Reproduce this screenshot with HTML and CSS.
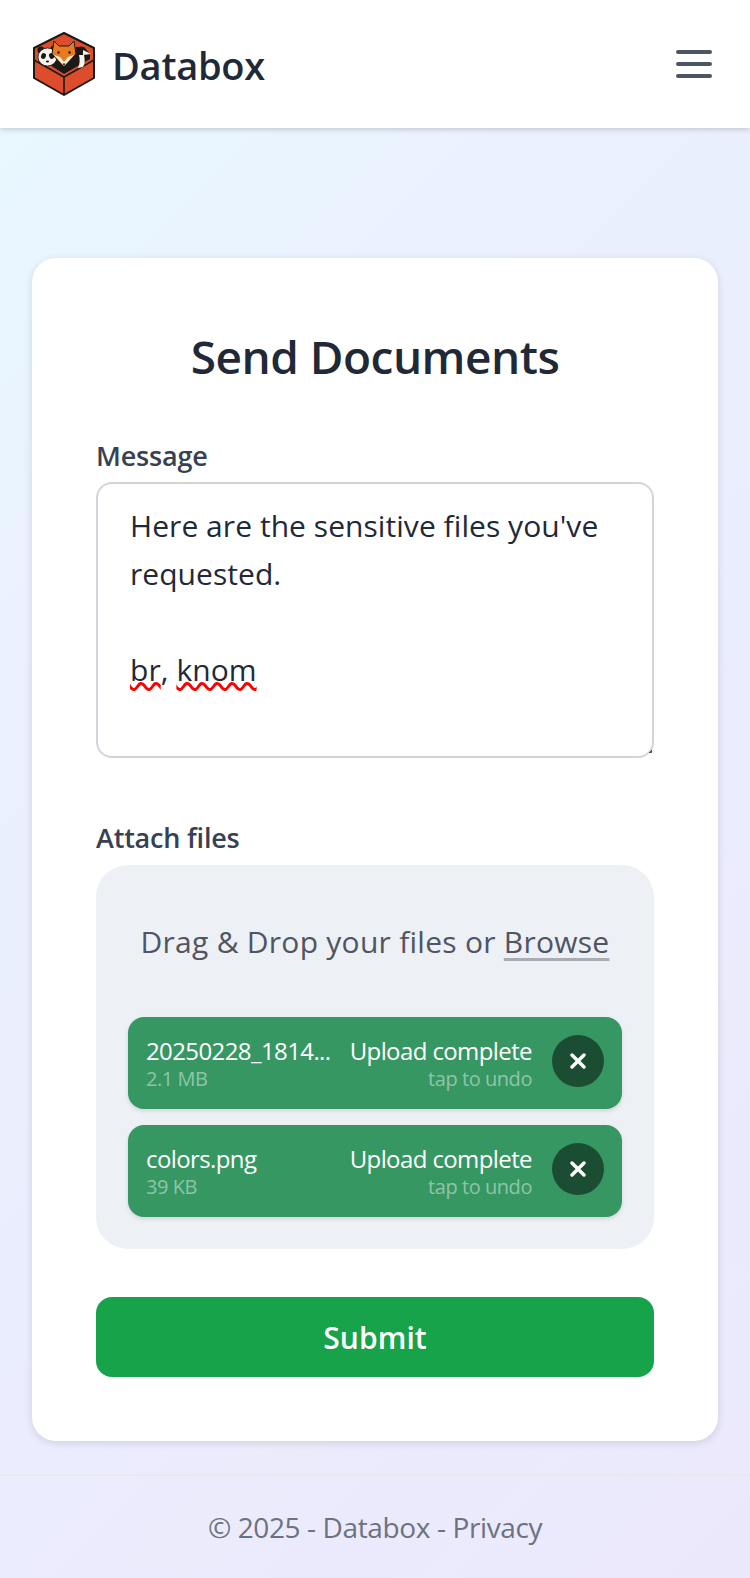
FILE: index.html
```html
<!DOCTYPE html>
<html lang="en">
<head>
  <meta charset="utf-8">
  <title>Databox</title>
  <meta name="viewport" content="width=device-width, initial-scale=1.0">
  <link rel="stylesheet" href="styles.css">
</head>
<body>
  <header class="topbar">
    <a class="brand" href="#">
      <svg class="brand-logo" viewBox="0 0 64 64" width="64" height="64" role="img" aria-label="Databox logo">
        <path d="M32 1 L62 16 V46 L32 63 L2 46 V16 Z" fill="#dd4c2b" stroke="#1c1a17" stroke-width="2" stroke-linejoin="round"/>
        <path d="M7 26 L32 42 L58 27 V22 L52 15 H44 L32 30 L20 24 Z" fill="#1c1a17"/>
        <path d="M2 28 L32 45 L62 28 M32 45 V63" fill="none" stroke="#1c1a17" stroke-width="1.6"/>
        <circle cx="9" cy="18" r="3.6" fill="#1c1a17"/>
        <circle cx="22" cy="17" r="3.6" fill="#1c1a17"/>
        <ellipse cx="15.5" cy="25" rx="9.5" ry="9" fill="#f7f4ee" stroke="#1c1a17" stroke-width=".8"/>
        <ellipse cx="11.5" cy="24" rx="2.4" ry="3" fill="#1c1a17" transform="rotate(20 11.5 24)"/>
        <ellipse cx="19.5" cy="24" rx="2.4" ry="3" fill="#1c1a17" transform="rotate(-20 19.5 24)"/>
        <ellipse cx="15.5" cy="29.5" rx="1.6" ry="1.1" fill="#1c1a17"/>
        <path d="M22 9 L27 14 H37 L42 9 L44 22 L32 35 L20 22 Z" fill="#ea7a1f" stroke="#1c1a17" stroke-width="1" stroke-linejoin="round"/>
        <path d="M22 23 L28 25 L32 30 L36 25 L42 23 L32 34 Z" fill="#fbf3e6"/>
        <circle cx="26.5" cy="20.5" r="1.2" fill="#1c1a17"/>
        <circle cx="37.5" cy="20.5" r="1.2" fill="#1c1a17"/>
        <path d="M30.5 31.5 H33.5 L32 34 Z" fill="#1c1a17"/>
        <circle cx="49" cy="20" r="5.5" fill="#1c1a17"/>
        <path d="M46 36 C48 32 48 27 47 23 L52 23 C53 28 53 32 51 35 Z" fill="#f7f4ee"/>
        <path d="M51 18 L59 22 L51 23 Z" fill="#f7f4ee"/>
      </svg>
      <span class="brand-name">Databox</span>
    </a>
    <button class="menu-btn" type="button" aria-label="Open menu">
      <svg viewBox="0 0 36 28" width="36" height="28" fill="none" stroke="#4b5563" stroke-width="4" stroke-linecap="round">
        <path d="M2 2 H34 M2 14 H34 M2 26 H34"/>
      </svg>
    </button>
  </header>

  <main class="page">
    <section class="card">
      <h1 class="card-title">Send Documents</h1>
      <form class="send-form">
        <label class="field-label" for="message">Message</label>
        <div class="message-box" id="message" role="textbox" aria-multiline="true">
          <p>Here are the sensitive files you've requested.</p>
          <p class="gap"><span class="misspelt">br</span>, <span class="misspelt">knom</span></p>
        </div>

        <label class="field-label attach-label">Attach files</label>
        <div class="dropzone">
          <p class="drop-hint">Drag &amp; Drop your files or <a href="#">Browse</a></p>
          <ul class="file-list">
            <li class="file-item">
              <div class="file-info">
                <span class="file-name">20250228_1814...</span>
                <span class="file-sub">2.1 MB</span>
              </div>
              <div class="file-status">
                <span class="status-main">Upload complete</span>
                <span class="file-sub">tap to undo</span>
              </div>
              <button class="file-undo" type="button" aria-label="Undo">
                <svg viewBox="0 0 16 16" width="16" height="16" stroke="#fff" stroke-width="3.4" stroke-linecap="round"><path d="M2 2 L14 14 M14 2 L2 14"/></svg>
              </button>
            </li>
            <li class="file-item">
              <div class="file-info">
                <span class="file-name">colors.png</span>
                <span class="file-sub">39 KB</span>
              </div>
              <div class="file-status">
                <span class="status-main">Upload complete</span>
                <span class="file-sub">tap to undo</span>
              </div>
              <button class="file-undo" type="button" aria-label="Undo">
                <svg viewBox="0 0 16 16" width="16" height="16" stroke="#fff" stroke-width="3.4" stroke-linecap="round"><path d="M2 2 L14 14 M14 2 L2 14"/></svg>
              </button>
            </li>
          </ul>
        </div>

        <button class="submit-btn" type="button">Submit</button>
      </form>
    </section>
  </main>

  <footer class="site-footer">© 2025 - Databox - <a href="#">Privacy</a></footer>
</body>
</html>
```

FILE: styles.css
```css
html {
  box-sizing: border-box;
}

*, *:before, *:after {
  box-sizing: inherit;
}

body {
  margin: 0;
  min-height: 1578px;
  display: flex;
  flex-direction: column;
  background: linear-gradient(135deg, #e8f8ff 0%, #eaf0fe 35%, #ece8fc 100%);
  font-family: "Open Sans", "Noto Sans", sans-serif;
  color: #1f2937;
}

a {
  color: inherit;
  text-decoration: none;
}

.topbar {
  height: 128px;
  padding: 0 38px 0 32px;
  display: flex;
  align-items: center;
  justify-content: space-between;
  background: #fff;
  box-shadow: 0 2px 5px rgba(0, 0, 0, .16);
}

.brand {
  display: flex;
  align-items: center;
  gap: 16px;
}

.brand-name {
  margin-top: 2px;
  font-size: 38px;
  font-weight: 600;
  letter-spacing: -.25px;
  color: #1f2937;
}

.menu-btn {
  padding: 0;
  border: 0;
  background: none;
  display: flex;
}

.page {
  flex: 1;
  padding: 130px 32px 32px;
}

.card {
  height: 1183px;
  padding: 64px;
  background: #fff;
  border-radius: 24px;
  box-shadow: 0 2px 8px rgba(0, 0, 0, .12);
}

.card-title {
  margin: 0 0 48px;
  font-size: 46px;
  line-height: 68px;
  font-weight: 600;
  letter-spacing: -.5px;
  text-align: center;
  color: #1f2937;
}

.field-label {
  display: block;
  margin-bottom: 8px;
  font-size: 27px;
  line-height: 36px;
  font-weight: 600;
  letter-spacing: -.2px;
  color: #374151;
}

.message-box {
  position: relative;
  height: 276px;
  padding: 18px 32px;
  border: 2px solid #d1d5db;
  border-radius: 16px;
  font-size: 30px;
  line-height: 48px;
  letter-spacing: .05px;
  color: #1f2937;
}

.message-box::after {
  content: "";
  position: absolute;
  right: 0;
  bottom: 3px;
  width: 3px;
  height: 3px;
  background: linear-gradient(135deg, transparent 50%, #555 50%);
}

.message-box p {
  margin: 0;
}

.message-box .gap {
  margin-top: 48px;
}

.misspelt {
  text-decoration: underline wavy #f00 2.5px;
  text-underline-offset: 1px;
}

.attach-label {
  margin-top: 62px;
  margin-bottom: 9px;
}

.dropzone {
  padding: 50px 32px 32px;
  border-radius: 32px;
  background: #edf0f5;
}

.drop-hint {
  margin: 0 0 48px;
  font-size: 30px;
  line-height: 54px;
  letter-spacing: .26px;
  text-align: center;
  color: #4f5562;
}

.drop-hint a {
  text-decoration: underline;
  text-decoration-color: #a8acb4;
  text-underline-offset: 5px;
}

.file-list {
  margin: 0;
  padding: 0;
  list-style: none;
  display: flex;
  flex-direction: column;
  gap: 16px;
}

.file-item {
  height: 92px;
  padding: 0 18px;
  display: flex;
  align-items: center;
  background: #369763;
  border-radius: 16px;
  box-shadow: 0 2px 4px rgba(0, 0, 0, .12);
  color: #fff;
}

.file-info, .file-status {
  display: flex;
  flex-direction: column;
}

.file-info {
  flex: 1;
}

.file-status {
  align-items: flex-end;
}

.file-name, .status-main {
  font-size: 24px;
  line-height: 32px;
  letter-spacing: -.6px;
}

.file-sub {
  font-size: 20px;
  line-height: 24px;
  letter-spacing: -.45px;
  color: rgba(255, 255, 255, .45);
}

.file-undo {
  width: 52px;
  height: 52px;
  margin: -4px 0 0 20px;
  padding: 0;
  display: flex;
  align-items: center;
  justify-content: center;
  border: 0;
  border-radius: 50%;
  background: #1b4d32;
}

.submit-btn {
  width: 100%;
  height: 80px;
  margin-top: 48px;
  border: 0;
  border-radius: 16px;
  background: #16a34a;
  color: #fff;
  font-family: inherit;
  font-size: 30px;
  font-weight: 600;
  letter-spacing: .1px;
}

.site-footer {
  height: 104px;
  border-top: 2px solid #e8e8f0;
  font-size: 28px;
  line-height: 102px;
  letter-spacing: -.38px;
  text-align: center;
  color: #6b7280;
}
```
